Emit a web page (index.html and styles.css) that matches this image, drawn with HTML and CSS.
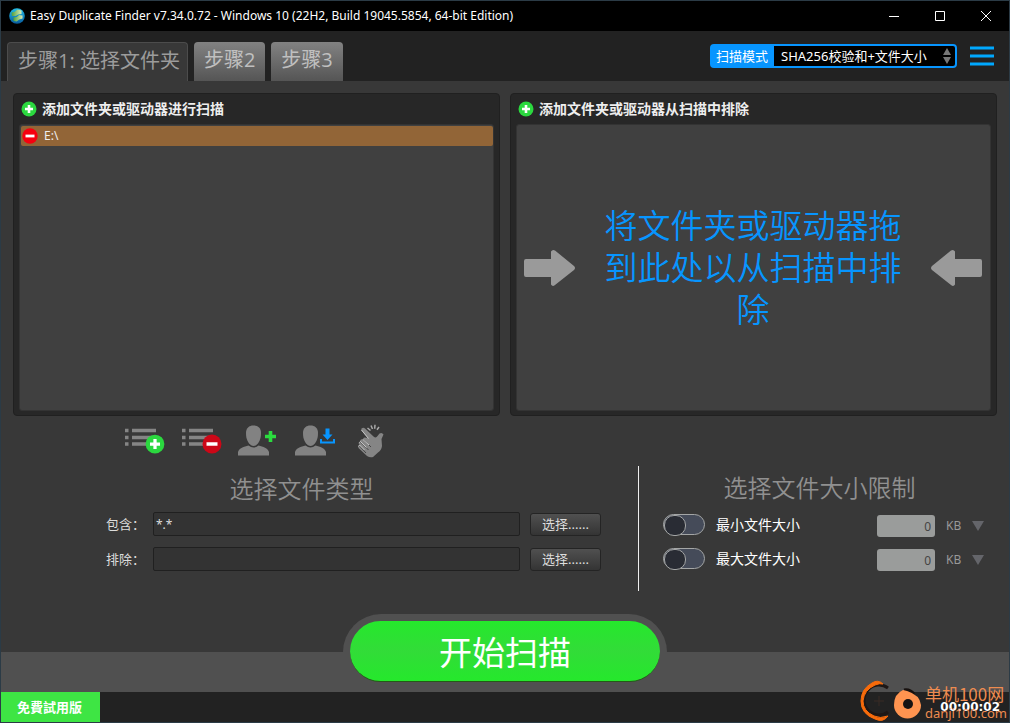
FILE: index.html
```html
<!DOCTYPE html>
<html lang="zh-CN">
<head>
<meta charset="utf-8">
<meta name="viewport" content="width=device-width, initial-scale=1">
<title>Easy Duplicate Finder</title>
<link rel="stylesheet" href="styles.css">
</head>
<body>
<svg class="defs" width="0" height="0" aria-hidden="true">
  <defs>
    <linearGradient id="globe" x1="0" y1="0" x2="0" y2="1"><stop offset="0" stop-color="#22bde8"/><stop offset="1" stop-color="#085a9c"/></linearGradient>
    <linearGradient id="leaf" x1="0" y1="0" x2="1" y2="0"><stop offset="0" stop-color="#4f9f3c"/><stop offset="1" stop-color="#d8ecb8"/></linearGradient>
    <symbol id="plus" viewBox="0 0 16 16"><circle cx="8" cy="8" r="7.5" fill="#2bd83f"/><path d="M8 4v8M4 8h8" stroke="#fff" stroke-width="2.6"/></symbol>
    <symbol id="minus" viewBox="0 0 16 16"><circle cx="8" cy="8" r="7.7" fill="#f5000f"/><path d="M3.5 8h9" stroke="#fff" stroke-width="2.8"/></symbol>
    <symbol id="arrow" viewBox="0 0 52 38"><path d="M2 10H27V2.500Q28.500 0 31 1.500L50 17Q52 19 50 21L31 36Q28.500 38 27 35.500V28H2Q0 28 0 26V12Q0 10 2 10Z" fill="#9a9a9a"/></symbol>
    <symbol id="person" viewBox="0 0 42 34"><path d="M8 9C8 4 11 1.500 15.500 1.500S23 4 23 9C23 15 21 19 18 21.200Q15.500 22.800 13 21.200C10 19 8 15 8 9Z" fill="#828282"/><path d="M0 31.500V28C1 24 6 22.800 10.500 21.500Q15.500 25.500 20.500 21.500C25 22.800 30 24 31 28V31.500Z" fill="#828282"/></symbol>
    <symbol id="list" viewBox="0 0 42 34"><path d="M1 6.500h3.500M1 13.500h3.500M1 20h3.500M8 6.500h24M8 13.500h24M8 20h24" stroke="#858585" stroke-width="3.500"/></symbol>
  </defs>
</svg>
<div class="window">
  <header class="titlebar">
    <svg class="logo" viewBox="0 0 16 16" aria-hidden="true"><circle cx="8" cy="8" r="7.800" fill="url(#globe)"/><path d="M2.500 4.500Q6 4.500 8.500 1.500L12.500 2.500V6Q9 6 6.500 8H3Z" fill="url(#leaf)"/><path d="M4.500 9.500Q8 9.500 10 7L13.500 7.500V10.500Q10 11 7.500 13.500L4.500 13Z" fill="url(#leaf)"/></svg>
    <h1 class="title">Easy Duplicate Finder v7.34.0.72 - Windows 10 (22H2, Build 19045.5854, 64-bit Edition)</h1>
    <button class="win-btn" aria-label="最小化"><svg viewBox="0 0 12 12"><path d="M1 6.500h10"/></svg></button>
    <button class="win-btn" aria-label="最大化"><svg viewBox="0 0 12 12"><path d="M1.500 1.500h9v9h-9z"/></svg></button>
    <button class="win-btn" aria-label="关闭"><svg viewBox="0 0 12 12"><path d="M1 1l10 10M11 1L1 11"/></svg></button>
  </header>

  <div class="topbar">
    <nav class="tabs">
      <button class="tab tab-active">步骤1: 选择文件夹</button>
      <button class="tab">步骤2</button>
      <button class="tab">步骤3</button>
    </nav>
    <div class="mode">
      <label class="mode-label" for="mode">扫描模式</label>
      <select class="mode-select" id="mode"><option>SHA256校验和+文件大小</option></select>
      <svg class="mode-arrows" viewBox="0 0 8 16" aria-hidden="true"><path d="M4 0l4 7H0zM4 16l4-7H0z" fill="#777"/></svg>
    </div>
    <button class="menu" aria-label="菜单"><svg viewBox="0 0 24 20"><path d="M0 2h24M0 10h24M0 18h24" stroke="#00a8ff" stroke-width="3"/></svg></button>
  </div>

  <main class="main">
    <div class="panels">
      <section class="panel">
        <button class="panel-head"><svg class="dot" aria-hidden="true"><use href="#plus"/></svg>添加文件夹或驱动器进行扫描</button>
        <div class="panel-body">
          <div class="row"><button class="remove" aria-label="移除"><svg class="dot" aria-hidden="true"><use href="#minus"/></svg></button>E:\</div>
        </div>
      </section>
      <section class="panel">
        <button class="panel-head"><svg class="dot" aria-hidden="true"><use href="#plus"/></svg>添加文件夹或驱动器从扫描中排除</button>
        <div class="panel-body drop">
          <svg class="arrow" aria-hidden="true"><use href="#arrow"/></svg>
          <p class="drop-text">将文件夹或驱动器拖到此处以从扫描中排除</p>
          <svg class="arrow arrow-left" aria-hidden="true"><use href="#arrow"/></svg>
        </div>
      </section>
    </div>

    <div class="options">
      <section class="types">
        <div class="tools">
          <button class="tool" aria-label="添加到列表"><svg viewBox="0 0 42 34"><use href="#list" width="42" height="34"/><use href="#plus" x="21" y="10" width="20" height="20"/></svg></button>
          <button class="tool" aria-label="从列表移除"><svg viewBox="0 0 42 34"><use href="#list" width="42" height="34"/><circle cx="31" cy="20" r="9.500" fill="#cc0717"/><path d="M25.500 20h11" stroke="#fff" stroke-width="3.500"/></svg></button>
          <button class="tool" aria-label="添加用户文件夹"><svg viewBox="0 0 42 34"><use href="#person" width="42" height="34"/><path d="M32.500 7v11M27 12.500h11" stroke="#2bdc3f" stroke-width="3.600"/></svg></button>
          <button class="tool" aria-label="载入用户文件夹"><svg viewBox="0 0 42 34"><use href="#person" width="42" height="34"/><path d="M30.500 4.500h4v6h3L32.500 16l-5-5.500h3z" fill="#0795ff"/><path d="M26 15v3.500h13V15" fill="none" stroke="#0795ff" stroke-width="2"/></svg></button>
          <button class="tool" aria-label="快速选择"><svg viewBox="0 0 42 34"><path d="M9.500 4.500Q11.500 3 13 4.500L21.500 12.500Q24 14.500 25.500 12L27.500 9.500Q30 8 31.500 10.500L29.500 15L30 22Q29.500 26 26 28.500L21 33Q18 34 15 32L6.500 24Q5.500 22 7.500 21Q5.500 18.500 8 17.500Q8 15 11 15Q12 13 14 13.800L15.500 14L9.500 6.500Q9 5.500 9.500 4.500Z" fill="#858585"/><path d="M7 21.500l7 7.500M8.500 18l8 8M11.500 15.500l7.500 7.500" fill="none" stroke="#464646" stroke-width="1"/><path d="M9.500 6l7 8.500M6.500 22.500l1-1.500 5 5M7.500 18.500l1-1 6 6M11 15.500l6 5.500" fill="none" stroke="#c4c4c4" stroke-width="1"/><path d="M15.500 4l3 2.500M19 1.500l1.500 3.500M23 .8l-.3 4M27 3l-2 2.800" stroke="#aaa" stroke-width="1.500"/></svg></button>
        </div>
        <h2 class="heading">选择文件类型</h2>
        <div class="filters">
          <label for="include">包含：</label><input class="filter" id="include" value="*.*"><button class="choose">选择......</button>
          <label for="exclude">排除：</label><input class="filter" id="exclude"><button class="choose">选择......</button>
        </div>
      </section>
      <section class="limits">
        <h2 class="heading">选择文件大小限制</h2>
        <div class="limit">
          <input class="switch" type="checkbox" id="min"><label class="limit-label" for="min">最小文件大小</label>
          <div class="amount"><input class="size" value="0" aria-label="最小值" disabled><select class="unit" aria-label="最小值单位" disabled><option>KB</option></select><svg class="caret" viewBox="0 0 12 10" aria-hidden="true"><path d="M0 0h12L6 10z"/></svg></div>
        </div>
        <div class="limit">
          <input class="switch" type="checkbox" id="max"><label class="limit-label" for="max">最大文件大小</label>
          <div class="amount"><input class="size" value="0" aria-label="最大值" disabled><select class="unit" aria-label="最大值单位" disabled><option>KB</option></select><svg class="caret" viewBox="0 0 12 10" aria-hidden="true"><path d="M0 0h12L6 10z"/></svg></div>
        </div>
      </section>
    </div>
  </main>

  <div class="dock"><div class="halo"><button class="start">开始扫描</button></div></div>

  <footer class="status">
    <span class="trial">免費試用版</span>
    <time class="timer">00:00:02</time>
    <div class="brand">
      <svg class="brand-mark" viewBox="0 0 62 42" aria-hidden="true"><path d="M28 8A15 15 0 1 0 28 32" fill="none" stroke="#1d1715" stroke-width="3"/><path d="M23 4Q18-1 12 3Q1 9 1 21Q1 34 15 39Q23 43 28 36Q20 39 14 36Q3 31 3 21Q4 10 15 5Q20 3 23 4Z" fill="#f76b0b" stroke="#f76b0b"/><path d="M19 16v10M14 21h10" stroke="#392a24"/><path d="M44 10q6-1 10 4" fill="none" stroke="#17110f" stroke-width="3"/><path d="M43 10Q34 14 34 25A13.500 13.500 0 1 0 61 25Q60 15 47 11Z" fill="#ff9450"/><circle cx="48" cy="24" r="5" fill="#171313"/></svg>
      <span class="brand-text"><b class="brand-name">单机100网</b><span class="brand-url">danji100.com</span></span>
    </div>
  </footer>
</div>
</body>
</html>
```

FILE: styles.css
```css
* { box-sizing: border-box; }
body {
  margin: 0;
  background: #2c4150;
  color: #fff;
  font: 14px/20px "Noto Sans", "Noto Sans CJK SC", sans-serif;
}
button, input, select { font: inherit; color: inherit; margin: 0; }
button { border: 0; padding: 0; background: none; }
.defs { position: absolute; }
.window { display: flex; flex-direction: column; min-height: 100vh; border: 1px solid #2b3b46; background: #383838; }

.titlebar { display: flex; align-items: center; height: 30px; padding-left: 8px; background: #000; }
.logo { width: 16px; height: 16px; margin-right: 5px; }
.title { flex: 1; margin: 0; font-size: 12px; font-weight: 400; white-space: nowrap; }
.win-btn { width: 46px; height: 30px; }
.win-btn svg { display: block; width: 12px; height: 12px; margin: auto; fill: none; stroke: #fff; }

.topbar { display: flex; align-items: center; height: 50px; padding: 0 15px 0 6px; background: #222; }
.tabs { display: flex; flex: 1; gap: 6px; align-self: flex-end; }
.tab {
  height: 39px;
  padding: 0 10px 3px;
  border-radius: 4px 4px 0 0;
  background: linear-gradient(#828282, #555);
  color: #c0c0c0;
  font-family: "Open Sans", "Noto Sans CJK SC", sans-serif;
  font-size: 20px;
  white-space: nowrap;
}
.tab-active { padding: 0 7px 3px 10px; border: 1px solid #4c4c4c; border-bottom: 0; background: #383838; color: #9c9c9c; }
.mode { display: flex; align-items: center; width: 247px; height: 24px; border: 2px solid #0795ff; border-radius: 4px; background: #000; position: relative; }
.mode-label { display: flex; align-items: center; height: 20px; padding: 0 6px 0 4px; background: #0795ff; font-size: 13px; white-space: nowrap; }
.mode-select { flex: 1; min-width: 0; height: 20px; padding: 0 7px; border: 0; background: none; font-size: 13px; appearance: none; }
.mode-arrows { position: absolute; right: 4px; width: 8px; height: 16px; }
.menu { width: 24px; height: 20px; margin-left: 13px; }
.menu svg { display: block; }

.main { flex: 1; padding: 12px; }
.panels { display: grid; grid-template-columns: 1fr 1fr; gap: 10px; }
.panel { display: flex; flex-direction: column; min-height: 323px; padding: 0 5px 4px; border: 1px solid #202020; border-radius: 4px; background: #272727; }
.panel-head { display: flex; align-items: center; gap: 5px; height: 30px; padding-left: 2px; font-size: 14px; font-weight: 700; color: #eee; }
.dot { display: block; flex: none; width: 16px; height: 16px; }
.panel-body { flex: 1; padding-top: 1px; border: 1px solid #333; border-radius: 3px; background: #404040; }
.row { display: flex; align-items: center; gap: 6px; height: 20px; margin-left: 1px; padding-left: 1px; border-radius: 2px; background: #926537; font-size: 12px; color: #eee; }
.drop { display: flex; align-items: center; justify-content: space-between; padding: 1px 8px 0 7px; }
.arrow { flex: none; width: 52px; height: 38px; }
.arrow-left { transform: scaleX(-1); }
.drop-text { width: 304px; margin: 0; color: #0795ff; font-size: 33px; font-weight: 350; line-height: 42px; text-align: center; }

.options { display: grid; grid-template-columns: 625px 1fr; }
.types { padding-top: 7px; }
.tools { display: flex; gap: 15px; padding-left: 111px; }
.tool { width: 42px; height: 36px; }
.tool svg { display: block; width: 42px; height: 34px; }
.heading { margin: 0; color: #909090; font-size: 24px; font-weight: 350; line-height: 30px; text-align: center; }
.types .heading { margin: 15px 48px 8px 0; }
.filters { display: grid; grid-template-columns: 37px 1fr 71px; gap: 11px 10px; align-items: center; padding: 0 37px 0 93px; color: #ddd; font-size: 13px; }
.filters label { white-space: nowrap; }
.filter { min-width: 0; height: 24px; padding: 0 2px; border: 1px solid #202020; border-radius: 2px; background: #333; font-size: 12px; }
.choose { height: 23px; border: 1px solid #242424; border-radius: 3px; background: linear-gradient(#505050, #343434); }
.limits { margin-top: 50px; padding: 7px 13px 14px 24px; border-left: 1px solid #eee; }
.limits .heading { margin: 0 8px 6px 0; }
.limit { display: flex; align-items: center; height: 30px; margin-bottom: 4px; }
.switch { flex: none; width: 42px; height: 21px; border: 1px solid #a4a6a6; border-radius: 11px; background: #454b59; appearance: none; }
.switch::before { content: ""; display: block; width: 20px; height: 19px; border: 1px solid #a4a6a6; border-radius: 10px; background: #292c34; }
.limit-label { flex: 1; padding: 2px 0 0 11px; white-space: nowrap; }
.amount { display: flex; align-items: center; padding-top: 4px; }
.size { width: 58px; height: 22px; padding: 0 4px; border: 0; border-radius: 3px; background: #9a9c9b; color: #444; font-size: 12px; text-align: right; }
.unit { width: 26px; margin-left: 11px; padding: 0; border: 0; background: none; color: #999; font-size: 12px; opacity: 1; appearance: none; }
.caret { width: 12px; height: 10px; fill: #64656a; }

.dock { display: flex; justify-content: center; height: 40px; background: #505050; }
.halo { flex: none; height: 78px; margin-top: -38px; padding: 7px; border-radius: 38px 38px 0 0; background: #505050; }
.start { display: block; width: 310px; height: 61px; padding-top: 3px; border-bottom: 1px solid #255a18; border-radius: 31px; background: linear-gradient(#25e82c, #32dc38 50%, #25e82c); font-size: 33px; font-weight: 400; }

.status { display: flex; align-items: center; height: 30px; background: #222; position: relative; }
.trial { display: flex; align-items: center; align-self: stretch; padding: 0 18px 0 16px; background: #3ee544; font-size: 13px; font-weight: 700; }
.timer { margin-left: auto; padding-right: 9px; font: 700 12px/20px "DejaVu Sans", sans-serif; }
.brand { display: flex; align-items: flex-end; gap: 3px; position: absolute; right: 2px; bottom: 0; }
.brand-mark { width: 62px; height: 42px; }
.brand-text { display: flex; flex-direction: column; color: #ee8c50; white-space: nowrap; }
.brand-name { font: 400 17px/20px "Noto Sans CJK SC", sans-serif; }
.brand-url { font: 13px/18px "Noto Sans", sans-serif; }
```
